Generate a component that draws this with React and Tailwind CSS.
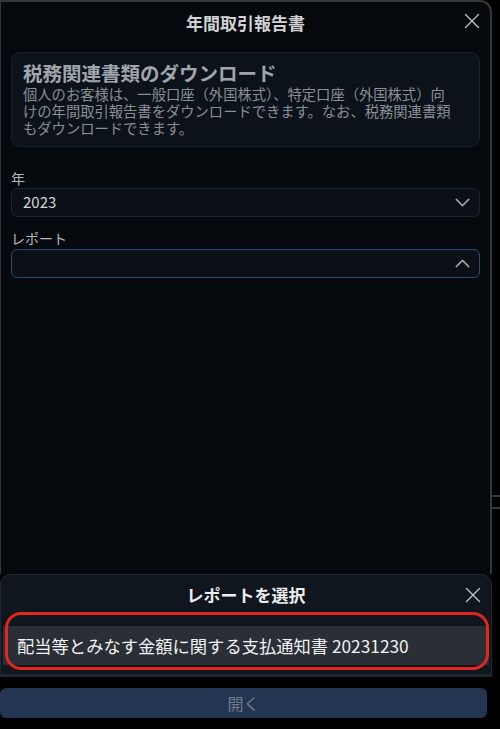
import { ChevronDown, ChevronUp, X } from "lucide-react";

const jp = { fontFamily: '"Noto Sans CJK JP", "Noto Sans", sans-serif' };

function SelectBox({ value, open }) {
  return (
    <div
      className={`flex h-[29px] items-center justify-between rounded-[6px] border bg-[#0b1017] pl-[11px] pr-[4px] ${
        open ? "border-[#2a4c78]" : "border-[#1e252e]"
      }`}
    >
      <span className="text-[15px] text-[#d2d5da]">{value}</span>
      {open ? (
        <ChevronUp className="h-[25px] w-[25px] text-[#a0a4aa]" strokeWidth={1.4} />
      ) : (
        <ChevronDown className="h-[25px] w-[25px] text-[#a0a4aa]" strokeWidth={1.4} />
      )}
    </div>
  );
}

export default function App() {
  return (
    <div className="flex h-[729px] w-[500px] overflow-hidden bg-black" style={jp}>
      {/* left column: modal + bottom sheet + button */}
      <div className="flex w-[492px] flex-col pb-[11px]">
        <div className="flex flex-1 flex-col rounded-tr-[12px] border-l border-r-2 border-t-2 border-[#34383e] bg-[#05080c]">
          <div className="relative flex h-[41px] items-center justify-center">
            <h1 className="text-[17px] font-bold text-[#d0d2d5]">年間取引報告書</h1>
            <X className="absolute right-[5px] top-[6px] h-[26px] w-[26px] text-[#b8bbc0]" strokeWidth={1.3} />
          </div>

          <div className="px-[10px] pt-[9px]">
            <div className="rounded-[9px] border border-[#1a212b] bg-[#0c121a] px-[11px] pb-[10px] pt-[8px]">
              <h2 className="text-[19.5px] font-bold leading-[24px] text-[#a0a5ac]">
                税務関連書類のダウンロード
              </h2>
              <p className="whitespace-nowrap text-[14.3px] leading-[17px] text-[#8a8f97]">
                個人のお客様は、一般口座（外国株式）、特定口座（外国株式）向
                <br />
                けの年間取引報告書をダウンロードできます。なお、税務関連書類
                <br />
                もダウンロードできます。
              </p>
            </div>

            <div className="mt-[22px] text-[14px] leading-[18px] text-[#b4b8be]">年</div>
            <div className="mt-[1px]">
              <SelectBox value="2023" />
            </div>

            <div className="mt-[12px] text-[14px] leading-[18px] text-[#b4b8be]">レポート</div>
            <div className="mt-[2px]">
              <SelectBox value="" open />
            </div>
          </div>
        </div>

        {/* bottom sheet */}
        <div className="relative h-[103px] rounded-t-[11px] border-x border-b-[3px] border-t border-[#22272e] bg-[#10161e]">
          <div className="relative flex h-[40px] items-center justify-center">
            <h3 className="text-[17px] font-bold text-[#eceef0]">レポートを選択</h3>
            <X className="absolute right-[5px] top-[7px] h-[26px] w-[26px] text-[#b8bbc0]" strokeWidth={1.3} />
          </div>
          <div className="mx-[2px] mt-[11px] flex h-[39px] items-center bg-[#2a2f36] pl-[14px]">
            <span className="text-[17.3px] text-[#f0f1f3]">
              配当等とみなす金額に関する支払通知書 20231230
            </span>
          </div>
          <div className="pointer-events-none absolute left-[4px] right-[2px] top-[37px] h-[58px] rounded-[16px] border-[3px] border-[#e3271d]" />
        </div>

        <div className="mt-[11px] mr-[5px] flex h-[30px] items-center justify-center rounded-[6px] bg-[#223651]">
          <span className="text-[16px] text-[#6f7b8b]">開く</span>
        </div>
      </div>

      {/* right strip of the page behind */}
      <div className="flex flex-1 flex-col pt-[495px]">
        <div className="h-[2px] bg-[#34383e]" />
        <div className="mt-[10px] h-[2px] bg-[#34383e]" />
      </div>
    </div>
  );
}
